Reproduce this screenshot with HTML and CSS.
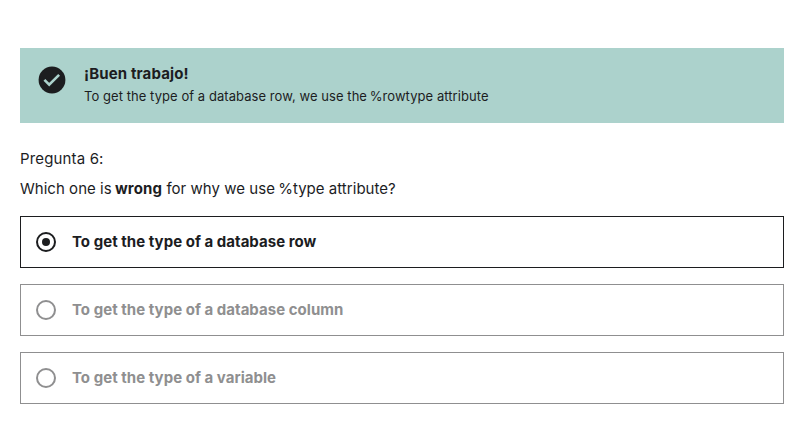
FILE: index.html
```html
<!DOCTYPE html>
<html lang="es">
<head>
<meta charset="utf-8">
<title>Pregunta 6</title>
<link rel="stylesheet" href="styles.css">
</head>
<body>
<main class="quiz">
  <section class="alert">
    <svg class="alert-icon" viewBox="0 0 28 28" aria-hidden="true">
      <circle cx="14" cy="14" r="13.4" fill="#1c1d1f"/>
      <path d="M6.4 13.9l4.8 4.8 9.9-9.9" fill="none" stroke="#acd2cc" stroke-width="2.6"/>
    </svg>
    <div class="alert-body">
      <h2 class="alert-title">¡Buen trabajo!</h2>
      <p class="alert-text">To get the type of a database row, we use the <span class="percent">%</span>rowtype attribute</p>
    </div>
  </section>
  <p class="question-number">Pregunta 6:</p>
  <p class="question">Which one is <b>wrong</b> for why we use <span class="percent">%</span>type attribute?</p>
  <ul class="answers">
    <li class="answer selected"><span class="radio"></span><span class="label">To get the type of a database row</span></li>
    <li class="answer"><span class="radio"></span><span class="label">To get the type of a database column</span></li>
    <li class="answer"><span class="radio"></span><span class="label">To get the type of a variable</span></li>
  </ul>
</main>
</body>
</html>
```
FILE: styles.css
```css
* { box-sizing: border-box; margin: 0; padding: 0; }
body { background: #fff; color: #1c1d1f; font-family: Inter, "Liberation Sans", sans-serif; }
.quiz { padding: 48px 16px 0 20px; }
.alert { display: flex; height: 75px; padding: 16px 18px; background: #acd2cc; }
.alert-icon { width: 28px; height: 28px; margin-top: 2px; flex: none; }
.alert-body { margin-left: 18px; }
.alert-title { font-size: 15px; line-height: 20px; font-weight: 700; letter-spacing: 0.13px; }
.alert-text { font-size: 13px; line-height: 20px; margin-top: 2px; letter-spacing: 0.06px; }
.question-number { margin-top: 25px; font-size: 15px; line-height: 22px; letter-spacing: 0.15px; }
.question { margin-top: 8px; font-size: 15px; line-height: 22px; letter-spacing: 0.03px; }
.question b { letter-spacing: 0.15px; margin-left: -1px; }
.percent { margin-left: -1px; }
.answers { list-style: none; display: grid; gap: 16px; margin-top: 16px; }
.answer { display: flex; align-items: center; height: 52px; padding: 0 15px; border: 1px solid #8f8f90; color: #8f8f90; font-size: 15px; font-weight: 700; letter-spacing: 0.03px; }
.radio { display: flex; align-items: center; justify-content: center; width: 20px; height: 20px; border: 2px solid currentColor; border-radius: 50%; }
.label { margin-left: 16px; padding-bottom: 2px; }
.selected { border-color: #1c1d1f; color: #1c1d1f; }
.selected .radio::after { content: ""; width: 8px; height: 8px; border-radius: 50%; background: currentColor; }
```
